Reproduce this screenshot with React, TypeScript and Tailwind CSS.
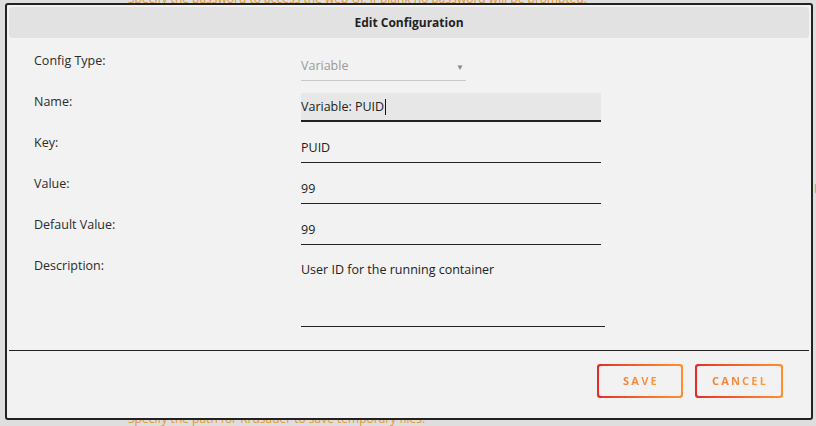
import React from "react";

function Label({ children }: { children: React.ReactNode }) {
  return (
    <div className="w-[267px] shrink-0 pt-[1px] text-[12.5px] leading-[16px] text-[#2b2b2b]">
      {children}
    </div>
  );
}

function Field({ value }: { value: string }) {
  return (
    <div className="w-[300px] h-[29px] pt-[1px] flex items-center border-b border-[#222] text-[12.5px] text-[#222]">
      {value}
    </div>
  );
}

function GradButton({ label, w }: { label: string; w: string }) {
  return (
    <div className={`h-[34px] ${w} rounded-[3px] p-[2px] bg-gradient-to-r from-[#e32a2a] to-[#ff8f2e]`}>
      <div className="h-full w-full rounded-[2px] bg-[#f2f2f2] flex items-center justify-center">
        <span className="pl-[2px] pt-[1px] text-[11px] font-bold tracking-[2.2px] bg-gradient-to-r from-[#f47a3a] to-[#ff9a3c] bg-clip-text text-transparent">
          {label}
        </span>
      </div>
    </div>
  );
}

export default function App() {
  return (
    <div className="relative w-[816px] h-[426px] overflow-hidden bg-[#dedede] font-['Open_Sans',sans-serif]">
      <div className="-mt-[9px] pl-[128px] text-[12px] leading-[16px] text-[#e3982f]">
        Specify the password to access the web UI, if blank no password will be prompted.
      </div>
      <div className="mt-[174px] pl-[814px] text-[12px] leading-[16px] text-[#e3982f] whitespace-nowrap">
        Port
      </div>
      <div className="mt-[214px] pl-[128px] text-[12px] leading-[16px] text-[#e3982f]">
        Specify the path for Krusader to save temporary files.
      </div>

      <div className="absolute left-[5px] top-[3px] w-[808px] h-[417px] border-2 border-[#222] rounded-[3px] bg-[#f2f2f2] p-[2px] flex flex-col">
        <div className="h-[31px] shrink-0 rounded-[4px] bg-[#e2e2e2] flex items-center justify-center text-[12px] font-bold text-[#222]">
          Edit Configuration
        </div>

        <div className="pt-[14px] pl-[25px] flex flex-col gap-[12px]">
          <div className="flex">
            <Label>Config Type:</Label>
            <div className="w-[165px] h-[29px] pt-[1px] flex items-center justify-between border-b border-[#c9c9c9] text-[12.5px] text-[#9a9a9a]">
              <span>Variable</span>
              <span className="text-[8px] mr-[2px] text-[#888]">▼</span>
            </div>
          </div>
          <div className="flex">
            <Label>Name:</Label>
            <div className="w-[300px] h-[29px] pt-[1px] flex items-center bg-[#e7e7e7] border-b-2 border-[#222] text-[12.5px] text-[#222]">
              Variable: PUID
              <span className="inline-block w-[1px] h-[16px] bg-[#111] ml-[1px]" />
            </div>
          </div>
          <div className="flex">
            <Label>Key:</Label>
            <Field value="PUID" />
          </div>
          <div className="flex">
            <Label>Value:</Label>
            <Field value="99" />
          </div>
          <div className="flex">
            <Label>Default Value:</Label>
            <Field value="99" />
          </div>
          <div className="flex">
            <Label>Description:</Label>
            <div className="w-[304px] h-[70px] pt-[5px] border-b border-[#222] text-[12.5px] leading-[16px] text-[#222]">
              User ID for the running container
            </div>
          </div>
        </div>

        <div className="mt-[23px] h-[1px] bg-[#222]" />

        <div className="pt-[13px] pr-[26px] flex justify-end gap-[12px]">
          <GradButton label="SAVE" w="w-[86px]" />
          <GradButton label="CANCEL" w="w-[88px]" />
        </div>
      </div>
    </div>
  );
}
